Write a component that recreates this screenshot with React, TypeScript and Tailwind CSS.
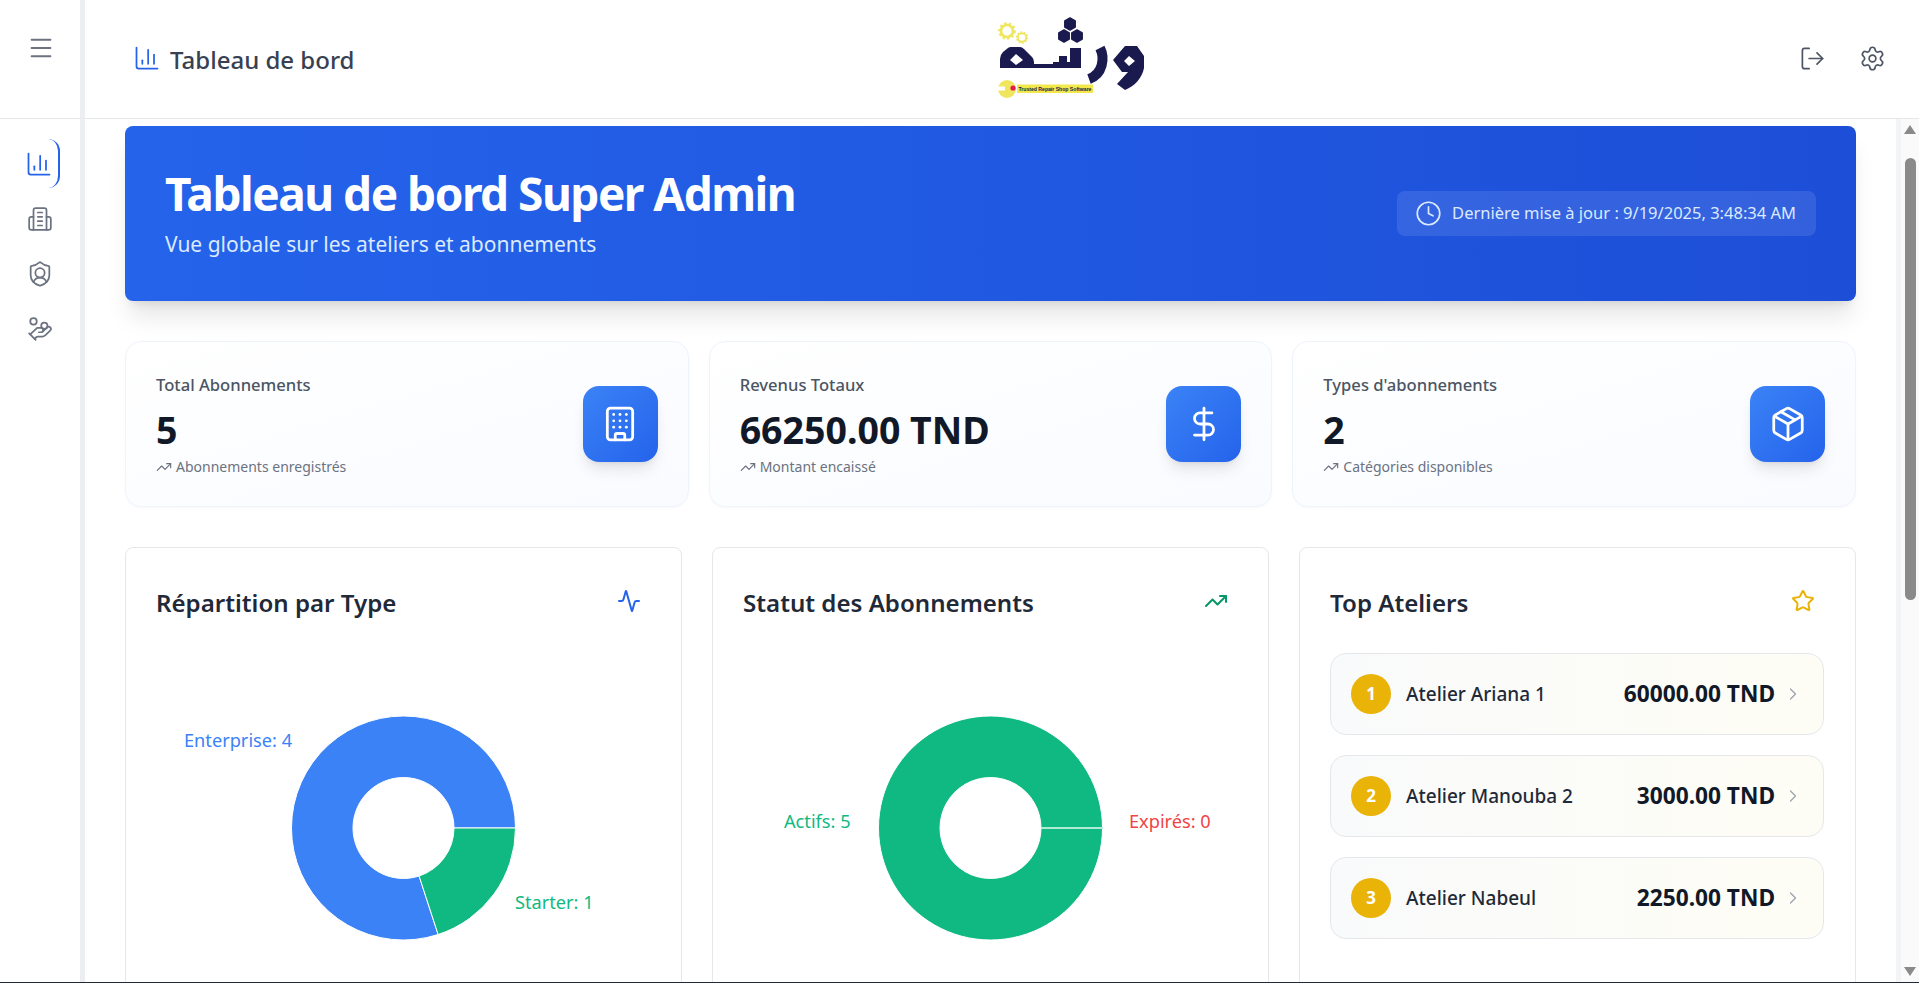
import { ChartColumn, Menu, ShieldUser, HandCoins, LogOut, Settings, Clock, Building, DollarSign, Package, TrendingUp, Activity, Star, ChevronRight } from "lucide-react";

const font = "font-['Noto_Sans','Open_Sans',sans-serif]";

function Building2Old() {
  return (
    <svg width="26" height="26" viewBox="0 0 24 24" fill="none" stroke="currentColor" strokeWidth="1.6" strokeLinecap="round" strokeLinejoin="round">
      <path d="M6 22V4a2 2 0 0 1 2-2h8a2 2 0 0 1 2 2v18Z" />
      <path d="M6 10H4a2 2 0 0 0-2 2v8a2 2 0 0 0 2 2h2" />
      <path d="M18 10h2a2 2 0 0 1 2 2v8a2 2 0 0 1-2 2h-2" />
      <path d="M10 6h4" />
      <path d="M10 10h4" />
      <path d="M10 14h4" />
      <path d="M10 18h4" />
    </svg>
  );
}

function hexPoints(x: number, y: number, r: number) {
  return [0, 1, 2, 3, 4, 5]
    .map((i) => {
      const a = (Math.PI / 3) * i - Math.PI / 2;
      return `${x + r * Math.cos(a)},${y + r * Math.sin(a)}`;
    })
    .join(" ");
}

function Hex({ x, y, r }: { x: number; y: number; r: number }) {
  return <polygon points={hexPoints(x, y, r)} fill="#1a1a4e" stroke="#1a1a4e" strokeWidth="1.5" strokeLinejoin="round" />;
}

function Gear({ x, y, r }: { x: number; y: number; r: number }) {
  return (
    <g fill="none" stroke="#f0e65e">
      <circle cx={x} cy={y} r={r} strokeWidth={r * 0.45} />
      <circle cx={x} cy={y} r={r * 1.3} strokeWidth={r * 0.35} strokeDasharray={`${r * 0.4} ${r * 0.4}`} />
    </g>
  );
}

function Logo() {
  return (
    <svg width="150" height="86" viewBox="0 0 150 86" className="block">
      <Gear x={12} y={19} r={6} />
      <Gear x={27} y={25.5} r={4.2} />
      <Hex x={75} y={12} r={6} />
      <Hex x={69} y={24} r={6} />
      <Hex x={82} y={24} r={6} />
      <path d="M5 56 V47 Q5 43 8 40 L13 36 Q14 35 16 35 H25 Q27 35 29 37 L37 45 Q39 47 39 50 V56 Z M15 48 L21 42 L28 48 L21 53 Z" fill="#1a1a4e" fillRule="evenodd" />
      <rect x="38" y="52" width="22" height="4" fill="#1a1a4e" />
      <path d="M58 56 V50 H64 V44 L72 44 V50 H75 V36 H86 V56 Z" fill="#1a1a4e" />
      <path d="M105 36 C110 46 108 62 94 67" fill="none" stroke="#1a1a4e" strokeWidth="10" />
      <path d="M118 48 L130 34 H142 L149 44 V56 C147 66 140 74 130 78 L122 72 L133 60 H127 Z M129 49 L134 44 L140 49 L134 54 Z" fill="#1a1a4e" fillRule="evenodd" />
      <circle cx="12" cy="77" r="9" fill="#f0e65e" />
      <rect x="2" y="74.5" width="8" height="4" fill="#fff" />
      <rect x="22" y="72.5" width="76" height="8.5" fill="#f2e84b" />
      <circle cx="18" cy="76" r="2.6" fill="#e11d48" />
      <text x="23.5" y="79" fontSize="5.2" fontWeight="700" fill="#1a1a4e" fontFamily="'Liberation Sans',sans-serif" textLength="73">Trusted Repair Shop Software</text>
    </svg>
  );
}

function arc(cx: number, cy: number, R: number, r: number, a0: number, a1: number) {
  const p = (rad: number, a: number) => `${cx + rad * Math.cos((a * Math.PI) / 180)} ${cy + rad * Math.sin((a * Math.PI) / 180)}`;
  const large = Math.abs(a1 - a0) > 180 ? 1 : 0;
  return `M${p(R, a0)} A${R} ${R} 0 ${large} 1 ${p(R, a1)} L${p(r, a1)} A${r} ${r} 0 ${large} 0 ${p(r, a0)} Z`;
}

function Stat({ label, value, note, icon }: { label: string; value: string; note: string; icon: React.ReactNode }) {
  return (
    <div className="flex h-[166px] items-center justify-between rounded-2xl border border-[#eef3fc] bg-gradient-to-br from-white to-[#f9fbff] pl-[30px] pr-[30px] shadow-[0_1px_2px_rgba(0,0,0,0.03)]">
      <div className="pt-[2px]">
        <p className="text-[16.6px] font-medium leading-6 text-[#4b5563]">{label}</p>
        <p className="mt-[13px] text-[37.5px] font-bold leading-10 text-[#111827]">{value}</p>
        <p className="mt-[7px] flex items-center gap-1 text-sm leading-5 text-[#6b7280]">
          <TrendingUp size={16} strokeWidth={1.75} />
          {note}
        </p>
      </div>
      <div className="flex h-[76px] w-[75px] items-center justify-center rounded-2xl bg-gradient-to-br from-[#3b82f6] to-[#2563eb] text-white shadow-lg">{icon}</div>
    </div>
  );
}

function ChartCard({ title, icon, children }: { title: string; icon: React.ReactNode; children: React.ReactNode }) {
  return (
    <div className="h-[460px] overflow-hidden rounded-lg border border-[#e5e7eb] bg-white pl-[30px] pr-[31px] pt-[31px]">
      <div className="flex h-[48px] items-center justify-between">
        <h3 className="text-[24.1px] font-semibold text-[#1f2937]">{title}</h3>
        <div className="mb-[4px] mr-[1px] flex h-10 w-10 items-center justify-center">{icon}</div>
      </div>
      {children}
    </div>
  );
}

function Rank({ n, name, amount }: { n: number; name: string; amount: string }) {
  return (
    <div className="flex h-[82px] items-center justify-between rounded-2xl border border-[#e5e7eb] bg-gradient-to-r from-[#f9fafb] to-[#fefdf5] px-[20px]">
      <div className="flex items-center gap-[15px]">
        <div className="flex h-10 w-10 items-center justify-center rounded-full bg-[#eab308] text-[17px] font-bold text-white">{n}</div>
        <span className="pt-[1px] text-[19px] font-medium text-[#1f2937]">{name}</span>
      </div>
      <div className="flex items-center gap-2">
        <span className="pt-[1px] text-[22.7px] font-bold text-[#111827]">{amount}</span>
        <ChevronRight size={20} strokeWidth={1.5} className="text-[#9ca3af]" />
      </div>
    </div>
  );
}

export default function App() {
  return (
    <div className={`flex h-[983px] w-[1919px] flex-col overflow-hidden border-b border-[#1f2937] bg-white ${font}`}>
      <div className="flex min-h-0 flex-1">
        <aside className="flex w-[80px] shrink-0 flex-col">
          <div className="flex h-[119px] shrink-0 justify-center border-b border-[#e5e7eb] pl-[1px] pt-[34px]">
            <Menu size={28} strokeWidth={1.75} className="text-[#6b7280]" />
          </div>
          <nav className="flex flex-col items-center gap-[6px] pt-[20px] text-[#6b7280]">
            <div className="flex h-[49px] w-[40px] items-center justify-center rounded-r-xl border-r-2 border-[#2563eb] text-[#2563eb]">
              <ChartColumn size={28} strokeWidth={1.5} />
            </div>
            <div className="flex h-[49px] items-center justify-center"><Building2Old /></div>
            <div className="flex h-[49px] items-center justify-center"><ShieldUser size={28} strokeWidth={1.5} /></div>
            <div className="flex h-[49px] items-center justify-center"><HandCoins size={26} strokeWidth={1.6} /></div>
          </nav>
        </aside>
        <div className="w-[5px] shrink-0 bg-[#eceef1]" />
        <div className="flex min-w-0 flex-1 flex-col">
          <header className="relative flex h-[119px] shrink-0 items-center justify-between border-b border-[#e5e7eb] pl-[48px] pr-[33px]">
            <div className="flex items-center gap-[9px] pb-[2px]">
              <ChartColumn size={28} strokeWidth={1.5} className="text-[#2563eb]" />
              <h1 className="pt-[3px] text-2xl font-medium text-[#374151]">Tableau de bord</h1>
            </div>
            <div className="absolute left-[910px] top-[12px]"><Logo /></div>
            <div className="flex items-center gap-[33px] pb-[2px] text-[#4b5563]">
              <LogOut size={27} strokeWidth={1.5} />
              <Settings size={27} strokeWidth={1.5} />
            </div>
          </header>
          <div className="flex min-h-0 flex-1">
            <main className="min-w-0 flex-1 overflow-hidden pl-[40px] pr-[40px] pt-[7px]">
              <section className="flex h-[175px] items-center justify-between rounded-lg bg-gradient-to-r from-[#2563eb] to-[#1d4ed8] px-[40px] pb-[4px] shadow-xl">
                <div>
                  <h2 className="text-[46px] font-bold leading-[56px] tracking-[-1.5px] text-white">Tableau de bord Super Admin</h2>
                  <p className="mt-[9px] text-[21px] leading-7 text-[#dbeafe]">Vue globale sur les ateliers et abonnements</p>
                </div>
                <div className="mt-[4px] flex h-[45px] items-center gap-[10px] rounded-lg bg-white/10 pl-[18px] pr-[20px] text-[16.5px] text-[#dbeafe]">
                  <Clock size={27} strokeWidth={1.5} />
                  <span>Dernière mise à jour : 9/19/2025, 3:48:34 AM</span>
                </div>
              </section>
              <section className="mt-[40px] grid grid-cols-3 gap-5">
                <Stat label="Total Abonnements" value="5" note="Abonnements enregistrés" icon={<Building size={38} strokeWidth={1.75} />} />
                <Stat label="Revenus Totaux" value="66250.00 TND" note="Montant encaissé" icon={<DollarSign size={38} strokeWidth={1.75} />} />
                <Stat label="Types d'abonnements" value="2" note="Catégories disponibles" icon={<Package size={38} strokeWidth={1.75} />} />
              </section>
              <section className="mt-[40px] grid grid-cols-3 gap-[30px]">
                <ChartCard title="Répartition par Type" icon={<Activity size={24} strokeWidth={2} className="text-[#2563eb]" />}>
                  <svg width="495" height="360" viewBox="0 0 495 360" className="block">
                    <path d={arc(247.5, 201, 112, 50.5, 72, 360)} fill="#3b82f6" stroke="#fff" />
                    <path d={arc(247.5, 201, 112, 50.5, 0, 72)} fill="#10b981" stroke="#fff" />
                    <text x="28" y="120" fontSize="18.2" fill="#3b82f6">Enterprise: 4</text>
                    <text x="359" y="282" fontSize="18.2" fill="#10b981">Starter: 1</text>
                  </svg>
                </ChartCard>
                <ChartCard title="Statut des Abonnements" icon={<TrendingUp size={24} strokeWidth={2} className="text-[#059669]" />}>
                  <svg width="495" height="360" viewBox="0 0 495 360" className="block">
                    <path d={arc(247.5, 201, 112, 50.5, 0, 359.99)} fill="#10b981" stroke="#fff" />
                    <line x1="298" y1="201" x2="360" y2="201" stroke="#a7e8d0" strokeWidth="1.5" />
                    <text x="41" y="201" fontSize="18.2" fill="#10b981">Actifs: 5</text>
                    <text x="386" y="201" fontSize="18.2" fill="#ef4444">Expirés: 0</text>
                  </svg>
                </ChartCard>
                <ChartCard title="Top Ateliers" icon={<Star size={24} strokeWidth={2} className="text-[#eab308]" />}>
                  <div className="mt-[26px] flex flex-col gap-5">
                    <Rank n={1} name="Atelier Ariana 1" amount="60000.00 TND" />
                    <Rank n={2} name="Atelier Manouba 2" amount="3000.00 TND" />
                    <Rank n={3} name="Atelier Nabeul" amount="2250.00 TND" />
                  </div>
                </ChartCard>
              </section>
            </main>
            <div className="w-[5px] shrink-0 bg-[#f3f4f6]" />
            <div className="flex w-[18px] shrink-0 flex-col items-center justify-between bg-[#fafafa] py-[6px]">
              <svg width="12" height="9" viewBox="0 0 12 9"><path d="M6 0 L12 9 H0 Z" fill="#8a8a8a" /></svg>
              <div className="absolute left-[1905px] top-[158px] h-[442px] w-[11px] rounded-full bg-[#8a8a8a]" />
              <svg width="12" height="9" viewBox="0 0 12 9"><path d="M0 0 H12 L6 9 Z" fill="#8a8a8a" /></svg>
            </div>
          </div>
        </div>
      </div>
    </div>
  );
}
